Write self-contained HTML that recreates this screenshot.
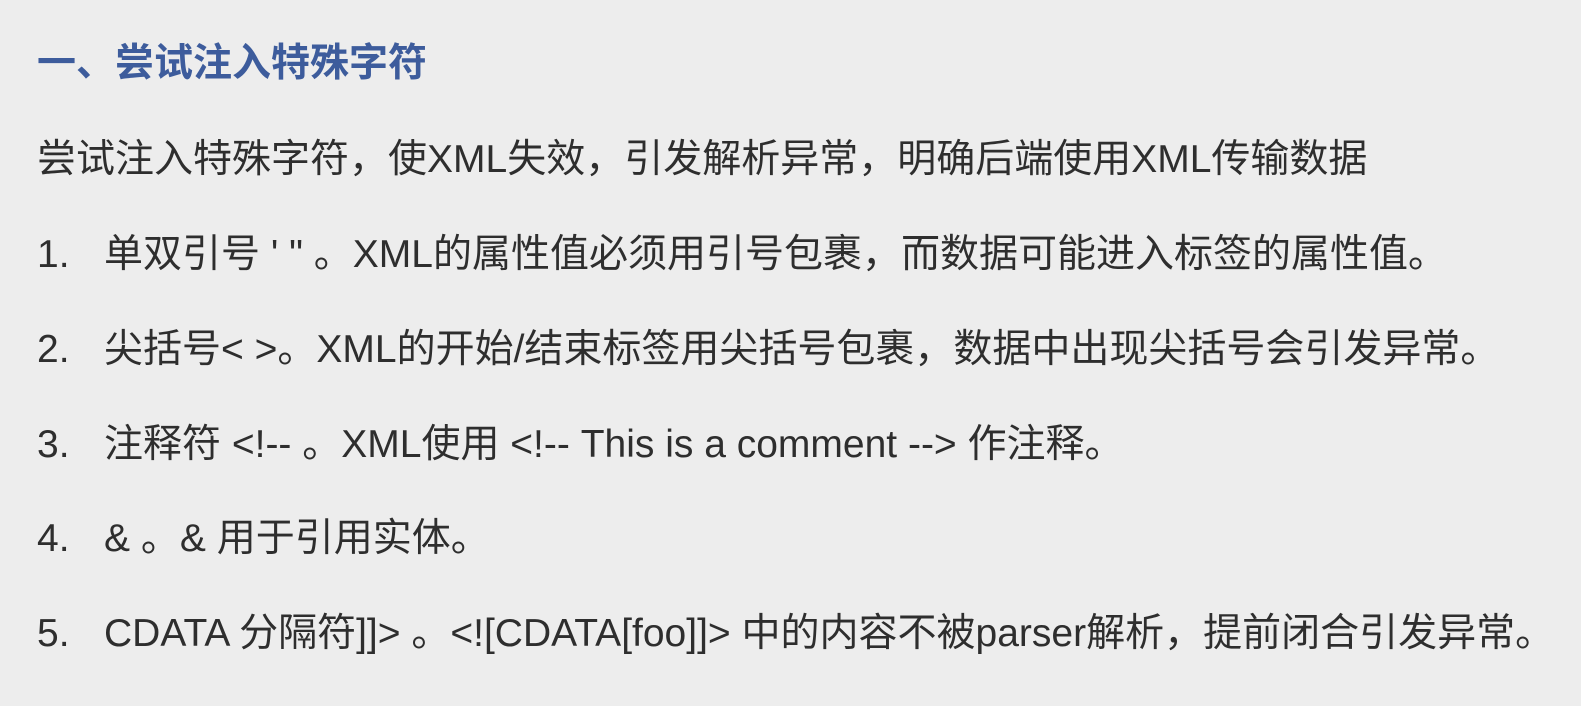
<!DOCTYPE html>
<html><head><meta charset="utf-8"><style>
html,body{margin:0;padding:0;}
body{width:1581px;height:706px;background:#ededed;overflow:hidden;position:relative;font-family:"Liberation Sans","Noto Sans CJK SC",sans-serif;color:#2e2e2e;}
.l{position:absolute;left:37px;font-size:39px;line-height:40px;white-space:nowrap;}
h1{position:absolute;left:37px;top:44px;margin:0;font-size:39px;line-height:40px;color:#3d5c9c;font-weight:bold;white-space:nowrap;}
.n{display:inline-block;width:67px;}
</style></head><body>
<h1>一、尝试注入特殊字符</h1>
<div class="l" style="top:140px">尝试注入特殊字符，使XML失效，引发解析异常，明确后端使用XML传输数据</div>
<div class="l" style="top:235px"><span class="n">1.</span>单双引号 ' " 。XML的属性值必须用引号包裹，而数据可能进入标签的属性值。</div>
<div class="l" style="top:330px"><span class="n">2.</span>尖括号&lt; &gt;。XML的开始/结束标签用尖括号包裹，数据中出现尖括号会引发异常。</div>
<div class="l" style="top:425px"><span class="n">3.</span>注释符 &lt;!-- 。XML使用 &lt;!-- This is a comment --&gt; 作注释。</div>
<div class="l" style="top:519px"><span class="n">4.</span>&amp; 。&amp; 用于引用实体。</div>
<div class="l" style="top:614px"><span class="n">5.</span>CDATA 分隔符]]&gt; 。&lt;![CDATA[foo]]&gt; 中的内容不被parser解析，提前闭合引发异常。</div>
</body></html>
